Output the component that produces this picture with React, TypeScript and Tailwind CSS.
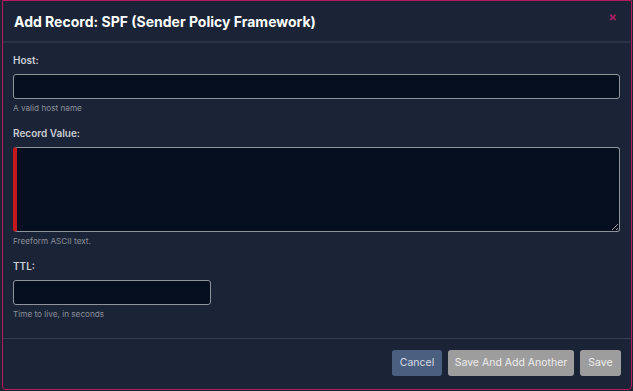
import React from "react";

export default function App() {
  return (
    <div
      className="w-[633px] h-[391px] bg-[#1c2333] pl-[2px] overflow-hidden"
      style={{ fontFamily: "Inter, 'Noto Sans', sans-serif" }}
    >
      <div className="w-[630px] h-[390px] bg-[#1b2437] border border-[#b51a5e] rounded-b-[4px] flex flex-col">
        <div className="h-[42px] flex items-center justify-between pl-[11px] pr-[14px] border-b-2 border-[#283242]">
          <h1 className="text-[14px] font-bold text-white">
            Add Record: SPF (Sender Policy Framework)
          </h1>
          <span className="text-[#a21f5f] text-[13px] font-bold leading-none -mt-[8px]">×</span>
        </div>
        <div className="px-[10px] pt-[9px] h-[296px] border-b border-[#333d4c]">
          <label className="block text-[10px] leading-[16px] font-semibold text-[#c9ccd3]">Host:</label>
          <input
            className="mt-[6px] block w-[607px] h-[25px] bg-[#060f1f] border border-[#8f939b] rounded-[3px] outline-none"
          />
          <p className="mt-[3px] text-[8.2px] leading-[12px] text-[#8a8f98]">A valid host name</p>
          <label className="mt-[11px] block text-[10px] leading-[16px] font-semibold text-[#c9ccd3]">Record Value:</label>
          <textarea
            className="mt-[6px] block w-[607px] h-[85px] bg-[#060f1f] border border-[#8f939b] border-l-4 border-l-[#c4181e] rounded-[3px] outline-none"
          />
          <p className="mt-[3px] text-[8.2px] leading-[12px] text-[#8a8f98]">Freeform ASCII text.</p>
          <label className="mt-[11px] block text-[10px] leading-[16px] font-semibold text-[#c9ccd3]">TTL:</label>
          <input
            className="mt-[6px] block w-[198px] h-[25px] bg-[#060f1f] border border-[#8f939b] rounded-[3px] outline-none"
          />
          <p className="mt-[3px] text-[8.2px] leading-[12px] text-[#8a8f98]">Time to live, in seconds</p>
        </div>
        <div className="flex-1 flex items-start justify-end gap-[6px] pt-[11px] pr-[10px]">
          <button className="h-[26px] w-[50px] whitespace-nowrap rounded-[3px] bg-[#4b5f80] text-[#d6dbe4] text-[10.5px]">Cancel</button>
          <button className="h-[26px] w-[126px] whitespace-nowrap rounded-[3px] bg-[#9e9d9d] text-[#ececec] text-[10.5px]">Save And Add Another</button>
          <button className="h-[26px] w-[41px] whitespace-nowrap rounded-[3px] bg-[#9e9d9d] text-[#ececec] text-[10.5px]">Save</button>
        </div>
      </div>
    </div>
  );
}
